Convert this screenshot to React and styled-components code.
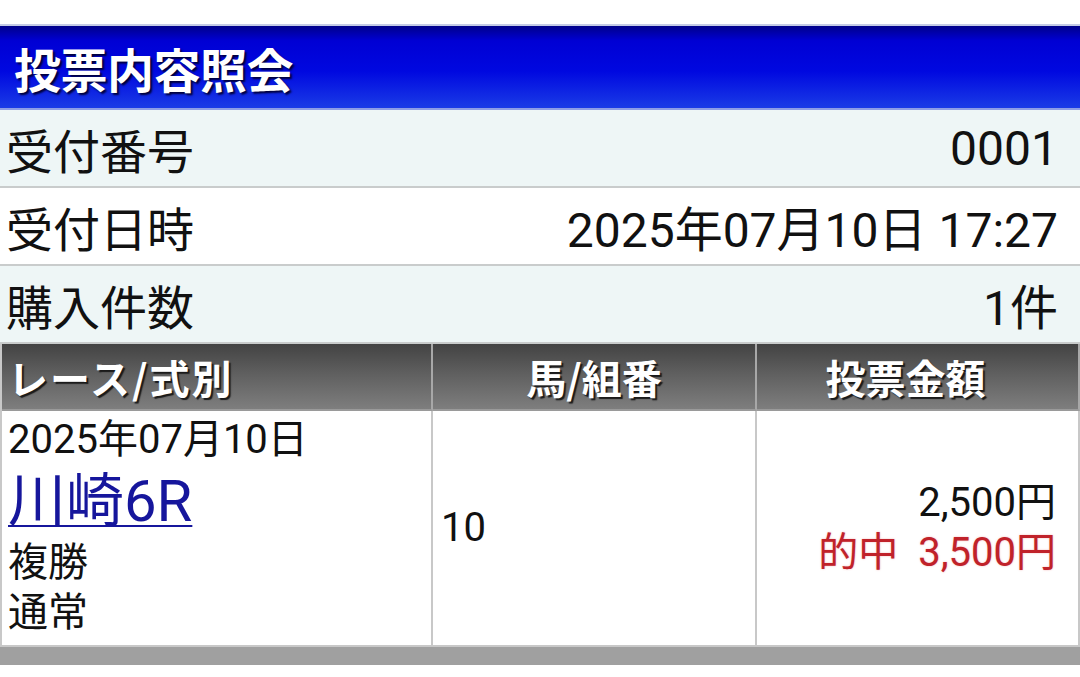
import React from "react";
import styled, { createGlobalStyle } from "styled-components";

const GlobalStyle = createGlobalStyle`
  html, body {
    margin: 0;
    padding: 0;
    background: #ffffff;
  }
  body {
    font-family: Roboto, "Noto Sans CJK JP", sans-serif;
    color: #111;
  }
`;

const Page = styled.div`
  padding-top: 24px;
  width: 1080px;
`;

const TitleBar = styled.h1`
  margin: 0;
  height: 82px;
  box-sizing: content-box;
  border-top: 2px solid #c4cbe6;
  border-bottom: 2px solid #8d9ee6;
  background: linear-gradient(
    to bottom,
    #00008a 0%,
    #0000d4 18%,
    #0008e0 55%,
    #1a3ce6 100%
  );
  display: flex;
  align-items: center;
  padding-left: 14px;
  color: #fff;
  font-family: "Noto Sans CJK JP", sans-serif;
  font-size: 47px;
  font-weight: 700;
  letter-spacing: -0.5px;
  text-shadow: 2px 2px 2px #00003a;
`;

const InfoRow = styled.div`
  height: 76px;
  border-bottom: 2px solid #c9cccc;
  background: ${(p) => (p.$alt ? "#eef6f6" : "#ffffff")};
  display: flex;
  align-items: center;
  justify-content: space-between;
  padding: 0 22px 0 6px;
  font-size: 48px;
  color: #111;
`;

const Label = styled.span`
  font-size: 47px;
`;

const Table = styled.div`
  display: grid;
  grid-template-columns: 431px 324px 1fr;
  border-left: 2px solid #c8c8c8;
`;

const HeadCell = styled.div`
  height: 65px;
  background: linear-gradient(to bottom, #434343 0%, #5f5f5f 45%, #7e7e7e 100%);
  border-right: 2px solid #a8a8a8;
  border-bottom: 2px solid #9a9a9a;
  display: flex;
  align-items: center;
  justify-content: ${(p) => (p.$center ? "center" : "flex-start")};
  padding-left: ${(p) => (p.$center ? "0" : "6px")};
  padding-right: ${(p) => p.$padRight || 0}px;
  letter-spacing: ${(p) => (p.$center ? "0" : "2px")};
  color: #fff;
  font-size: 40px;
  font-weight: 700;
  font-family: "Noto Sans CJK JP", sans-serif;
  text-shadow: 2px 2px 1px #1a1a1a;
`;

const BodyCell = styled.div`
  height: 236px;
  box-sizing: border-box;
  background: #fff;
  border-right: 2px solid #c8c8c8;
  border-bottom: 2px solid #c8c8c8;
  font-size: 40px;
  line-height: 1.25;
  display: flex;
  flex-direction: column;
  justify-content: ${(p) => (p.$middle ? "center" : "flex-start")};
  align-items: ${(p) => (p.$right ? "flex-end" : "flex-start")};
  padding: ${(p) => (p.$middle ? "0 22px 0 8px" : "4px 6px 0 6px")};
`;

const RaceLink = styled.a`
  color: #16169c;
  font-size: 58px;
  text-decoration: underline;
  text-decoration-thickness: 2px;
  text-underline-offset: 4px;
`;

const Line = styled.div`
  color: ${(p) => (p.$hit ? "#c0222a" : "#111")};
  text-shadow: ${(p) => (p.$hit ? "0 0 2px rgba(220, 40, 40, 0.35)" : "none")};
  white-space: pre;
`;

const BottomBar = styled.div`
  height: 18px;
  background: #a0a0a0;
`;

const info = [
  { label: "受付番号", value: "0001", alt: true },
  { label: "受付日時", value: "2025年07月10日 17:27", alt: false },
  { label: "購入件数", value: "1件", alt: true },
];

export default function App() {
  return (
    <>
      <GlobalStyle />
      <Page>
        <TitleBar>投票内容照会</TitleBar>
        {info.map((r) => (
          <InfoRow key={r.label} $alt={r.alt}>
            <Label>{r.label}</Label>
            <span>{r.value}</span>
          </InfoRow>
        ))}
        <Table>
          <HeadCell>レース/式別</HeadCell>
          <HeadCell $center>馬/組番</HeadCell>
          <HeadCell $center $padRight={24}>投票金額</HeadCell>
          <BodyCell>
            <Line>2025年07月10日</Line>
            <RaceLink href="#">川崎6R</RaceLink>
            <Line>複勝</Line>
            <Line>通常</Line>
          </BodyCell>
          <BodyCell $middle>
            <Line>10</Line>
          </BodyCell>
          <BodyCell $middle $right>
            <Line>2,500円</Line>
            <Line $hit>的中  3,500円</Line>
          </BodyCell>
        </Table>
        <BottomBar />
      </Page>
    </>
  );
}
